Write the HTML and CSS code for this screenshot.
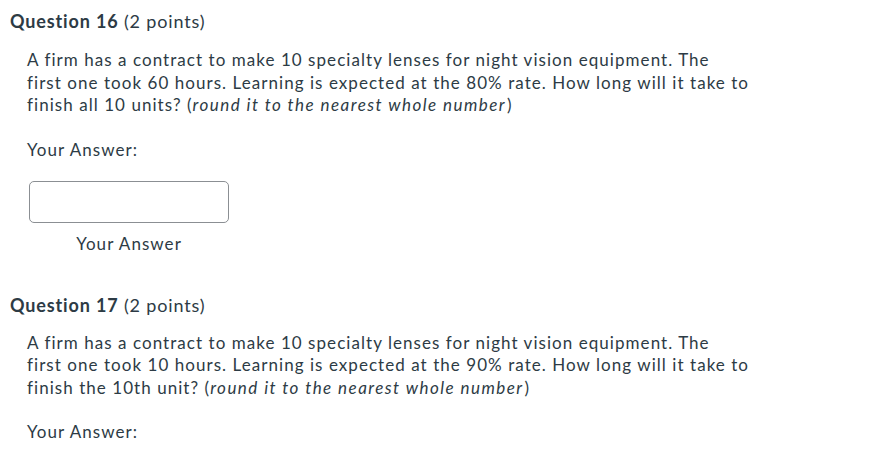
FILE: index.html
```html
<!DOCTYPE html>
<html>
<head>
<meta charset="utf-8">
<link rel="stylesheet" href="styles.css">
</head>
<body>
<div class="page">
  <section class="question">
    <h2 class="q-title"><span class="q-num">Question 16</span> (2 points)</h2>
    <div class="q-body">
      <p class="q-text">A firm has a contract to make 10 specialty lenses for night vision equipment. The<br>first one took 60 hours. Learning is expected at the 80% rate. How long will it take to finish all 10 units? (<em>round it to the nearest whole number</em>)</p>
      <p class="answer-label">Your Answer:</p>
      <div class="answer-field">
        <div class="answer-input"></div>
        <div class="answer-caption">Your Answer</div>
      </div>
    </div>
  </section>
  <section class="question q2">
    <h2 class="q-title"><span class="q-num">Question 17</span> (2 points)</h2>
    <div class="q-body">
      <p class="q-text">A firm has a contract to make 10 specialty lenses for night vision equipment. The<br>first one took 10 hours. Learning is expected at the 90% rate. How long will it take to finish the 10th unit? (<em>round it to the nearest whole number</em>)</p>
      <p class="answer-label">Your Answer:</p>
    </div>
  </section>
</div>
</body>
</html>
```
FILE: styles.css
```css
html, body {
  margin: 0;
  padding: 0;
  background: #ffffff;
}
body {
  font-family: Lato, "Noto Sans", sans-serif;
  color: #2d3b45;
  font-size: 17px;
  line-height: 22.5px;
  letter-spacing: 1.05px;
  font-variant-ligatures: none;
}
.page {
  padding: 10px 0 0 10px;
  width: 746px;
}
.q-title {
  margin: 0;
  font-size: 18px;
  font-weight: 400;
  line-height: 22px;
  letter-spacing: 0.85px;
}
.q-num {
  font-weight: 700;
}
.q-body {
  padding: 0 0 0 17px;
}
.q-text {
  margin: 17px 0 0 0;
}
.q-text em {
  letter-spacing: 1.45px;
  padding-right: 1px;
}
.answer-label {
  margin: 22px 0 0 0;
}
.answer-field {
  display: flex;
  flex-direction: column;
  align-items: center;
  width: 200px;
  margin: 20px 0 0 2px;
}
.answer-input {
  box-sizing: border-box;
  width: 200px;
  height: 42px;
  border: 1px solid #8b8f93;
  border-radius: 5px;
  background: #fff;
}
.answer-caption {
  margin-top: 10px;
}
.q2 {
  margin-top: 38px;
}
.q2 .q-text {
  margin-top: 16px;
}
```
